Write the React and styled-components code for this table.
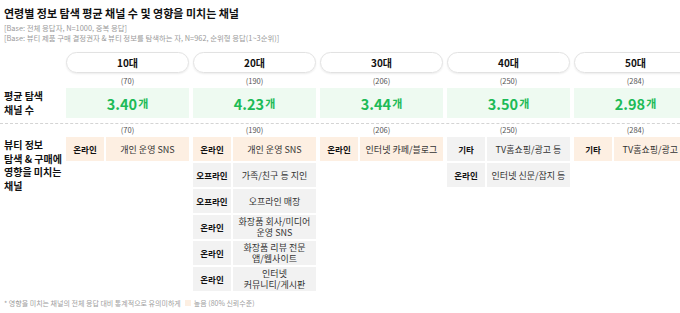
import React from 'react'
import styled, { createGlobalStyle } from 'styled-components'

const Global = createGlobalStyle`
body{
  margin:0;
  background:#fff;
  font-family:"Noto Sans CJK KR","Noto Sans",sans-serif;
  color:#111;
  overflow:hidden;
}
`;

const Page = styled.div`
padding:6px 0 0 4px;
width:720px;
`;

const Title = styled.h1`
margin:0;
font-size:11px;
line-height:14px;
font-weight:700;
`;

const Sub = styled.div`
margin-top:3px;
font-size:7.4px;
line-height:10px;
color:#9a9a9a;
`;

const Grid = styled.div`
display:grid;
grid-template-columns:58px repeat(5, 123px);
column-gap:4px;
`;

const Top = styled(Grid)`
margin-top:9px;
`;

const Pill = styled.div`
height:21px;
border:1px solid #e2e2e2;
border-radius:11px;
box-shadow:0 1px 2px rgba(0,0,0,0.08);
box-sizing:border-box;
display:flex;
align-items:center;
justify-content:center;
font-size:10px;
font-weight:700;
`;

const Count = styled.div`
text-align:center;
font-size:7.5px;
line-height:10px;
color:#555;
margin:${p => p.$top ?? 3}px 0 2px;
`;

const RowLabel = styled.div`
font-size:10px;
font-weight:700;
line-height:${p => p.$lh || 14}px;
display:flex;
flex-direction:column;
justify-content:${p => p.$top ? 'flex-start' : 'center'};
padding-top:${p => p.$pad || 0}px;
`;

const ValueBox = styled.div`
height:30px;
background:#eefaf1;
display:flex;
align-items:center;
justify-content:center;
color:#1dbb57;
font-weight:700;
font-size:14.5px;
span{ font-size:11px; margin-left:1px; }
`;

const Divider = styled.div`
margin:5px 0 0 -4px;
border-top:1px dashed #d4d4d4;
width:700px;
`;

const Column = styled.div`
display:flex;
flex-direction:column;
`;

const List = styled.div`
display:flex;
flex-direction:column;
gap:2px;
`;

const Row = styled.div`
display:grid;
grid-template-columns:38px 1fr;
column-gap:2px;
min-height:24px;
`;

const Cell = styled.div`
background:${p => (p.$hi ? '#fdefe2' : '#f2f2f2')};
display:flex;
align-items:center;
justify-content:center;
text-align:center;
white-space:pre-line;
font-size:${p => (p.$bold ? '8.5px' : '9px')};
font-weight:${p => (p.$bold ? 700 : 400)};
line-height:11px;
color:${p => (p.$bold ? '#111' : '#333')};
padding:1px 0;
`;

const Note = styled.div`
margin-top:7px;
font-size:7px;
line-height:10px;
color:#a0a0a0;
display:flex;
align-items:center;
`;

const Swatch = styled.i`
display:inline-block;
width:6px;
height:6px;
background:#fdefe2;
margin:0 3px 0 4px;
`;

const ages = [
  { age: '10대', n: 70, avg: '3.40', ch: [['온라인', '개인 운영 SNS', 1]] },
  {
    age: '20대', n: 190, avg: '4.23', ch: [
      ['온라인', '개인 운영 SNS', 1],
      ['오프라인', '가족/친구 등 지인'],
      ['오프라인', '오프라인 매장'],
      ['온라인', '화장품 회사/미디어\n운영 SNS'],
      ['온라인', '화장품 리뷰 전문\n앱/웹사이트'],
      ['온라인', '인터넷\n커뮤니티/게시판'],
    ]
  },
  { age: '30대', n: 206, avg: '3.44', ch: [['온라인', '인터넷 카페/블로그', 1]] },
  {
    age: '40대', n: 250, avg: '3.50', ch: [
      ['기타', 'TV홈쇼핑/광고 등'],
      ['온라인', '인터넷 신문/잡지 등'],
    ]
  },
  { age: '50대', n: 284, avg: '2.98', ch: [['기타', 'TV홈쇼핑/광고 등', 1]] },
];

const App = () => {
  return (
    <>
      <Global />
      <Page>
        <Title>연령별 정보 탐색 평균 채널 수 및 영향을 미치는 채널</Title>
        <Sub>
          [Base: 전체 응답자, N=1000, 중복 응답]<br />
          [Base: 뷰티 제품 구매 결정권자 &amp; 뷰티 정보를 탐색하는 자, N=962, 순위형 응답(1~3순위)]
        </Sub>

        <Top>
          <div></div>
          {ages.map(a => <Pill key={a.age}>{a.age}</Pill>)}
          <div></div>
          {ages.map(a => <Count key={a.age}>({a.n})</Count>)}
          <RowLabel>
            <div>평균 탐색</div>
            <div>채널 수</div>
          </RowLabel>
          {ages.map(a => (
            <ValueBox key={a.age}>{a.avg}<span>개</span></ValueBox>
          ))}
        </Top>

        <Divider />

        <Grid>
          <RowLabel $top $pad={14} $lh={13.5}>
            <div>뷰티 정보</div>
            <div>탐색 &amp; 구매에</div>
            <div>영향을 미치는</div>
            <div>채널</div>
          </RowLabel>
          {ages.map(a => (
            <Column key={a.age}>
              <Count $top={1}>({a.n})</Count>
              <List>
                {a.ch.map((c, i) => (
                  <Row key={i}>
                    <Cell $bold $hi={c[2]}>{c[0]}</Cell>
                    <Cell $hi={c[2]}>{c[1]}</Cell>
                  </Row>
                ))}
              </List>
            </Column>
          ))}
        </Grid>

        <Note>
          * 영향을 미치는 채널의 전체 응답 대비 통계적으로 유의미하게<Swatch />높음 (80% 신뢰수준)
        </Note>
      </Page>
    </>
  )
}

export default App
